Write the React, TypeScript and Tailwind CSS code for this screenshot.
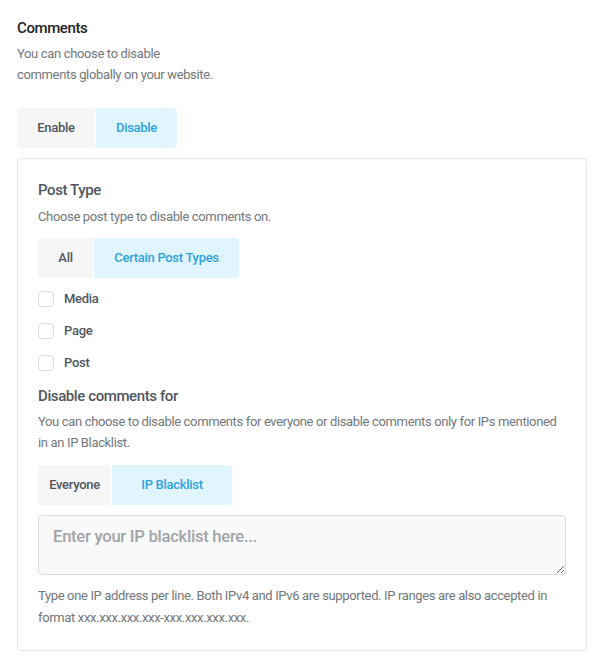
import React, { useState } from 'react';

type SegProps = {
    options: { key: string; label: string; width: string }[];
    value: string;
    onChange: (v: string) => void;
};

const Segmented: React.FC<SegProps> = ({ options, value, onChange }) => (
    <div className="flex gap-px">
        {options.map((o, i) => {
            const active = o.key === value;
            const radius = i === 0 ? "rounded-l-[4px]" : i === options.length - 1 ? "rounded-r-[4px]" : "";
            return (
                <button
                    key={o.key}
                    onClick={() => onChange(o.key)}
                    className={`${o.width} ${radius} h-10 text-[13px] font-medium tracking-[-0.3px] ${active ? "bg-[#e1f5fe] text-[#2ea2e0]" : "bg-[#f6f6f6] text-[#50575e]"}`}
                >
                    {o.label}
                </button>
            );
        })}
    </div>
);

const Check: React.FC<{ label: string }> = ({ label }) => (
    <label className="flex items-center gap-[10px] h-4">
        <span className="w-4 h-4 rounded-[4px] border border-[#dcdcde] bg-white"></span>
        <span className="text-[13px] font-medium tracking-[-0.3px] text-[#50575e]">{label}</span>
    </label>
);

export default function App() {
    const [global, setGlobal] = useState('disable');
    const [postType, setPostType] = useState('certain');
    const [who, setWho] = useState('ip');

    return (
        <div className="w-[610px] min-h-[672px] bg-white px-[17px] pt-[17px] font-['Roboto',sans-serif]">
            <h2 className="text-[15px] font-medium text-[#1d2327] leading-[22px] tracking-[-0.4px]">Comments</h2>
            <p className="mt-[4px] text-[13px] text-[#72777c] leading-[21px] tracking-[-0.35px] w-[196px]">
                You can choose to disable comments globally on your website.
            </p>
            <div className="mt-[23px]">
                <Segmented
                    value={global}
                    onChange={setGlobal}
                    options={[
                        { key: 'enable', label: 'Enable', width: 'w-[78px]' },
                        { key: 'disable', label: 'Disable', width: 'w-[81px]' },
                    ]}
                />
            </div>

            <div className="mt-[10px] w-[570px] border border-[#e2e4e7] rounded-[4px] px-5 pt-[20px] pb-[21px]">
                <h3 className="text-[15px] font-medium text-[#50575e] leading-[22px] tracking-[-0.4px]">Post Type</h3>
                <p className="mt-[7px] text-[13px] text-[#72777c] leading-[18px] tracking-[-0.35px]">Choose post type to disable comments on.</p>
                <div className="mt-[12px]">
                    <Segmented
                        value={postType}
                        onChange={setPostType}
                        options={[
                            { key: 'all', label: 'All', width: 'w-[55px]' },
                            { key: 'certain', label: 'Certain Post Types', width: 'w-[145px]' },
                        ]}
                    />
                </div>
                <div className="mt-[13px] flex flex-col gap-4">
                    <Check label="Media" />
                    <Check label="Page" />
                    <Check label="Post" />
                </div>

                <h3 className="mt-[14px] text-[15px] font-medium text-[#50575e] leading-[22px] tracking-[-0.4px]">Disable comments for</h3>
                <p className="mt-[4px] text-[13px] text-[#72777c] leading-[21px] tracking-[-0.35px]">
                    You can choose to disable comments for everyone or disable comments only for IPs mentioned in an IP Blacklist.
                </p>
                <div className="mt-[12px]">
                    <Segmented
                        value={who}
                        onChange={setWho}
                        options={[
                            { key: 'everyone', label: 'Everyone', width: 'w-[73px]' },
                            { key: 'ip', label: 'IP Blacklist', width: 'w-[120px]' },
                        ]}
                    />
                </div>
                <textarea
                    className="mt-[10px] block w-[528px] h-[60px] bg-[#f9f9f9] border border-[#dcdcde] rounded-[4px] px-[14px] py-[8px] text-[16.7px] font-medium tracking-[-0.3px] text-[#50575e] placeholder:text-[#a0a5aa] outline-none"
                    placeholder="Enter your IP blacklist here..."
                />
                <p className="mt-[10px] text-[13px] text-[#72777c] leading-[22px] tracking-[-0.35px]">
                    Type one IP address per line. Both IPv4 and IPv6 are supported. IP ranges are also accepted in format xxx.xxx.xxx.xxx-xxx.xxx.xxx.xxx.
                </p>
            </div>
        </div>
    );
}
